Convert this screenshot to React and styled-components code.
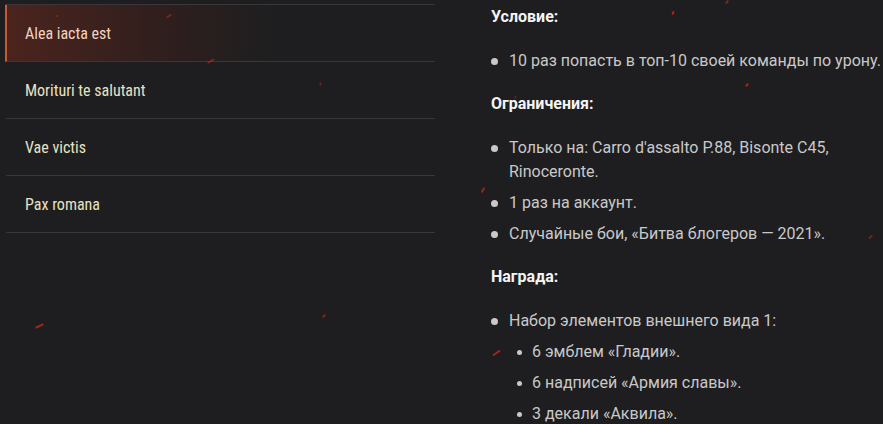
import React from "react";
import styled, { createGlobalStyle } from "styled-components";

const Global = createGlobalStyle`
  html, body { margin: 0; padding: 0; background: #1e1e20; }
  body { width: 883px; height: 424px; overflow: hidden; }
`;

const Page = styled.div`
  position: relative;
  display: flex;
  align-items: flex-start;
  gap: 56px;
  width: 883px;
  height: 424px;
  padding: 4px 0 0 5px;
  box-sizing: border-box;
  background: #1e1e20;
  overflow: hidden;
`;

const Menu = styled.nav`
  width: 430px;
  flex: none;
  border-top: 1px solid #38383a;
`;

const MenuItem = styled.div`
  height: 57px;
  display: flex;
  align-items: center;
  padding-left: 18px;
  box-sizing: border-box;
  border-bottom: 1px solid #38383a;
  border-left: 2px solid ${(p) => (p.$active ? "#c4583b" : "transparent")};
  background: ${(p) =>
    p.$active
      ? "linear-gradient(90deg, rgba(95,38,28,0.7) 0%, rgba(70,32,26,0.45) 35%, rgba(30,30,32,0) 62%)"
      : "transparent"};
  font-family: "Roboto Condensed", "Liberation Sans Narrow", "DejaVu Sans Condensed", sans-serif;
  font-size: 16px;
  color: ${(p) => (p.$active ? "#f2d2c2" : "#e7e2c2")};
`;

const Content = styled.div`
  padding-top: 4px;
  font-family: Roboto, "Noto Sans", sans-serif;
`;

const Heading = styled.div`
  font-weight: 700;
  font-size: 16px;
  line-height: 18px;
  color: #f4f4f4;
  margin-bottom: 23px;
`;

const List = styled.ul`
  list-style: none;
  margin: 0 0 22px 0;
  padding: 0;
`;

const Item = styled.li`
  position: relative;
  padding-left: ${(p) => (p.$sub ? "41px" : "18px")};
  font-size: 16px;
  line-height: 24px;
  color: #c9c9c9;
  margin-bottom: 7px;
  white-space: nowrap;
  &::before {
    content: "";
    position: absolute;
    left: ${(p) => (p.$sub ? "26px" : "0px")};
    top: ${(p) => (p.$sub ? "10px" : "9px")};
    width: ${(p) => (p.$sub ? "5px" : "7px")};
    height: ${(p) => (p.$sub ? "5px" : "7px")};
    border-radius: 50%;
    background: #c9c9c9;
  }
`;

const Spark = styled.span`
  position: absolute;
  width: ${(p) => p.$w || 6}px;
  height: 2px;
  border-radius: 1px;
  background: rgba(200, 40, 30, ${(p) => p.$o || 0.8});
  transform: rotate(${(p) => p.$r || -30}deg);
`;

const sparks = [
  { x: 166, y: 15, w: 6, r: -35, o: 0.5 },
  { x: 207, y: 60, w: 8, r: -30, o: 0.6 },
  { x: 319, y: 83, w: 3, r: -70, o: 0.5 },
  { x: 56, y: 15, w: 2, r: 0, o: 0.6 },
  { x: 35, y: 325, w: 9, r: -25, o: 0.75 },
  { x: 322, y: 315, w: 4, r: -50, o: 0.6 },
  { x: 671, y: 12, w: 4, r: -70, o: 0.8 },
  { x: 725, y: 1, w: 4, r: -50, o: 0.6 },
  { x: 745, y: 84, w: 4, r: -50, o: 0.8 },
  { x: 480, y: 189, w: 6, r: -60, o: 0.7 },
  { x: 868, y: 236, w: 5, r: -40, o: 0.5 },
  { x: 492, y: 352, w: 9, r: -35, o: 0.8 },
  { x: 514, y: 96, w: 3, r: -60, o: 0.4 },
];

const menu = ["Alea iacta est", "Morituri te salutant", "Vae victis", "Pax romana"];

export default function App() {
  return (
    <>
      <Global />
      <Page>
        <Menu>
          {menu.map((m, i) => (
            <MenuItem key={m} $active={i === 0}>
              {m}
            </MenuItem>
          ))}
        </Menu>
        <Content>
          <Heading>Условие:</Heading>
          <List>
            <Item>10 раз попасть в топ-10 своей команды по урону.</Item>
          </List>
          <Heading>Ограничения:</Heading>
          <List>
            <Item>
              Только на: Carro d'assalto P.88, Bisonte C45,
              <br />
              Rinoceronte.
            </Item>
            <Item>1 раз на аккаунт.</Item>
            <Item>Случайные бои, «Битва блогеров — 2021».</Item>
          </List>
          <Heading>Награда:</Heading>
          <List>
            <Item>Набор элементов внешнего вида 1:</Item>
            <Item $sub>6 эмблем «Гладии».</Item>
            <Item $sub>6 надписей «Армия славы».</Item>
            <Item $sub>3 декали «Аквила».</Item>
          </List>
        </Content>
        {sparks.map((s, i) => (
          <Spark
            key={i}
            $w={s.w}
            $r={s.r}
            $o={s.o}
            style={{ left: s.x, top: s.y }}
          />
        ))}
      </Page>
    </>
  );
}
